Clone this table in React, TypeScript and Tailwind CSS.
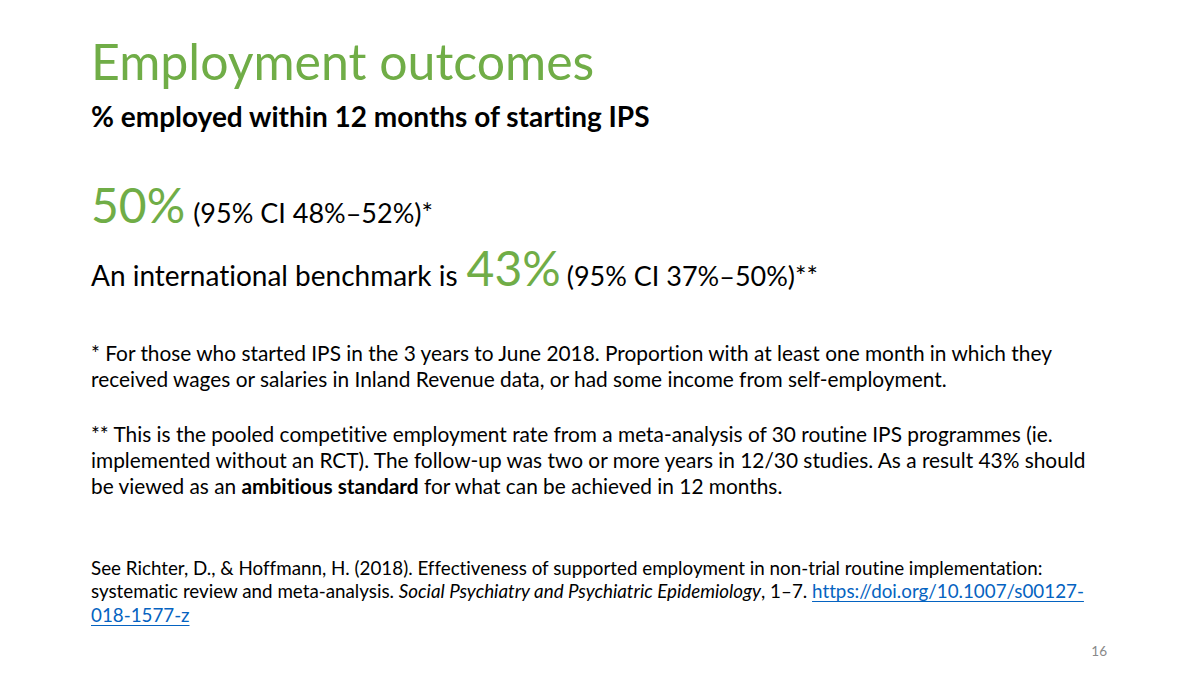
const green = 'text-[#70ad47]'

function Link({ children }: { children: React.ReactNode }) {
  return <span className="text-[#0563c1] underline decoration-1 underline-offset-[3px]">{children}</span>
}

export default function App() {
  return (
    <div className="w-[1200px] h-[675px] bg-white text-black overflow-hidden font-['Lato','Open_Sans',sans-serif] [font-variant-ligatures:none]">
      <div className="pt-[33px] pl-[91px] pr-[93px] whitespace-nowrap">
        {/* Title */}
        <h1 className={`${green} text-[50px] leading-[56px] font-normal`}>Employment outcomes</h1>
        <p className="mt-[12px] text-[28px] leading-[30px] font-bold">% employed within 12 months of starting IPS</p>

        {/* Headline numbers */}
        <div className="mt-[50px] flex items-baseline">
          <span className={`${green} text-[48px] leading-none`}>50%</span>
          <span className="ml-[8px] text-[27px] leading-none">(95% CI 48%–52%)*</span>
        </div>
        <div className="mt-[15px] flex items-baseline">
          <span className="text-[28px] leading-none">An international benchmark is</span>
          <span className={`${green} ml-[9px] text-[48px] leading-none`}>43%</span>
          <span className="ml-[6px] text-[27px] leading-none">(95% CI 37%–50%)**</span>
        </div>

        {/* Footnotes */}
        <p className="mt-[47.5px] text-[20.85px] leading-[26px]">
          * For those who started IPS in the 3 years to June 2018. Proportion with at least one month in which they
          <br />
          received wages or salaries in Inland Revenue data, or had some income from self-employment.
        </p>
        <p className="mt-[29px] text-[20.85px] leading-[26px]">
          ** This is the pooled competitive employment rate from a meta-analysis of 30 routine IPS programmes (ie.
          <br />
          implemented without an RCT). The follow-up was two or more years in 12/30 studies. As a result 43% should
          <br />
          be viewed as an <b className="font-bold">ambitious standard</b> for what can be achieved in 12 months.
        </p>

        {/* Reference */}
        <p className="mt-[57px] text-[18.8px] leading-[23.5px]">
          See Richter, D., &amp; Hoffmann, H. (2018). Effectiveness of supported employment in non-trial routine implementation:
          <br />
          systematic review and meta-analysis. <i>Social Psychiatry and Psychiatric Epidemiology</i>, 1–7.{' '}
          <Link>https://doi.org/10.1007/s00127-</Link>
          <br />
          <Link>018-1577-z</Link>
        </p>

        <p className="mt-[17px] text-right text-[13.5px] leading-[16px] text-[#898989]">16</p>
      </div>
    </div>
  )
}
